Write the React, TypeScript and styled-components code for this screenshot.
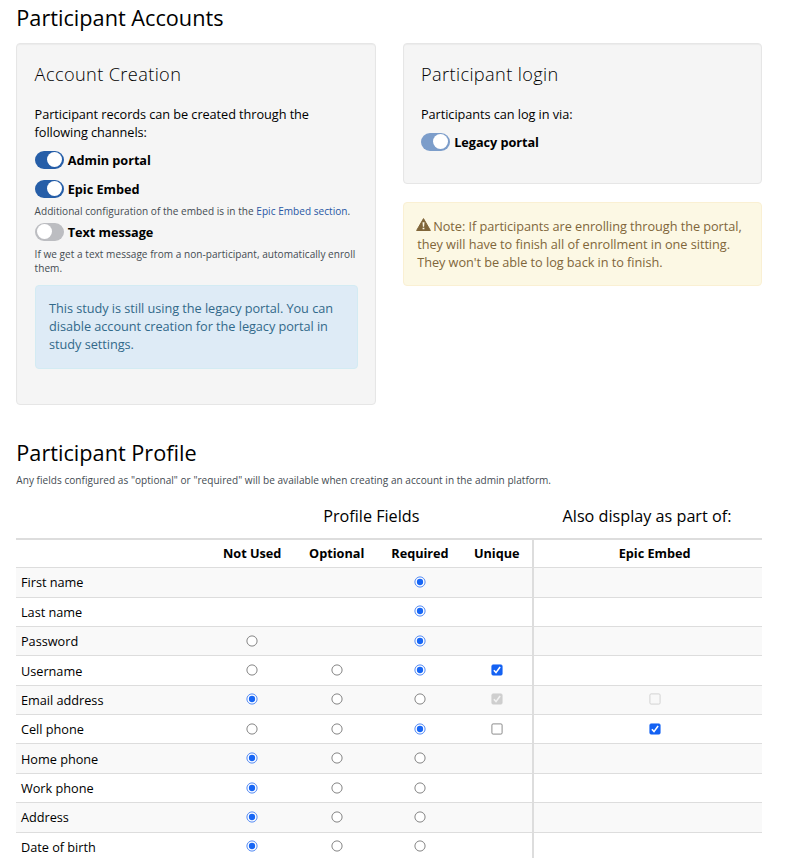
import React from 'react';
import styled, { createGlobalStyle } from 'styled-components';

const GlobalStyle = createGlobalStyle`
  *, *::before, *::after { box-sizing: border-box; }
  html, body { margin: 0; height: 858px; overflow: hidden; background: #fff; }
  body { font-family: "Open Sans", "Noto Sans", sans-serif; font-size: 12.72px; line-height: 18px; color: #000; }
`;

const Page = styled.main`
  width: 746px;
  height: 858px;
  margin-left: 16.3px;
  overflow: hidden;
`;

const Title = styled.h2<{ $top: number }>`
  margin: 0;
  padding-top: ${(p) => p.$top}px;
  font-size: 21.7px;
  line-height: 24px;
  font-weight: 400;
`;

const Columns = styled.div`
  display: grid;
  grid-template-columns: 360px 359.4px;
  column-gap: 26.4px;
  align-items: start;
  margin-top: 13px;
`;

const Well = styled.section<{ $height: number }>`
  height: ${(p) => p.$height}px;
  padding: 17px 17.3px;
  background: #f5f5f5;
  border: 1px solid #e6e6e6;
  border-radius: 4px;
  box-shadow: inset 0 1px 1px rgba(0, 0, 0, 0.04);
`;

const WellTitle = styled.h3`
  margin: 1px 0 19px;
  font-size: 18.2px;
  line-height: 24px;
  font-weight: 300;
  letter-spacing: 0.37px;
`;

const Text = styled.p`
  margin: 0;
  letter-spacing: -0.06px;
`;

const SwitchRow = styled.div<{ $top: number }>`
  display: flex;
  align-items: center;
  gap: 3.7px;
  height: 19px;
  margin-top: ${(p) => p.$top}px;
  font-weight: 700;
`;

const Track = styled.span<{ $color: string; $on: boolean }>`
  display: flex;
  justify-content: ${(p) => (p.$on ? 'flex-end' : 'flex-start')};
  align-items: center;
  width: 29.5px;
  height: 18px;
  padding: 0 2px;
  border-radius: 9px;
  background: ${(p) => p.$color};
`;

const Thumb = styled.span`
  width: 15px;
  height: 15px;
  border-radius: 50%;
  background: #fff;
`;

const SwitchLabel = styled.span`
  letter-spacing: -0.05px;
`;

const Help = styled.p<{ $top: number }>`
  margin: ${(p) => p.$top}px 0 0;
  font-size: 10.05px;
  line-height: 14px;
  letter-spacing: 0.032px;
  color: #444b52;
`;

const Link = styled.a`
  color: #2857a4;
`;

const Alert = styled.div<{ $kind: 'info' | 'warning' }>`
  height: ${(p) => (p.$kind === 'info' ? 83.6 : 84)}px;
  padding: ${(p) => (p.$kind === 'info' ? 13 : 14)}px 13.5px;
  border: 1px solid ${(p) => (p.$kind === 'info' ? '#d3ebf3' : '#faf0d3')};
  border-radius: 4px;
  background: ${(p) => (p.$kind === 'info' ? '#deebf6' : '#fcf8e4')};
  color: ${(p) => (p.$kind === 'info' ? '#32698a' : '#80663a')};
  margin-top: ${(p) => (p.$kind === 'info' ? 10 : 18)}px;
  letter-spacing: -0.045px;
`;

const WarningSvg = styled.svg`
  display: inline-block;
  margin: 0 2px 0 -1px;
  vertical-align: 0;
`;

const Table = styled.div`
  margin-top: 18px;
`;

const columns = '193.6px 84.6px 84.4px 82.2px 71.3px 229.6px';

const GroupRow = styled.div`
  display: grid;
  grid-template-columns: 194px 322px 229.4px;
  height: 33px;
  font-size: 16.2px;
  line-height: 22.6px;
  text-align: center;
`;

const Row = styled.div<{ $striped?: boolean; $head?: boolean }>`
  display: grid;
  grid-template-columns: ${columns};
  height: ${(p) => (p.$head ? 29 : 29.38)}px;
  border-top: ${(p) => (p.$head ? 2 : 1)}px solid #dddddd;
  background: ${(p) => (p.$striped ? '#f9f9f9' : '#fff')};
  font-weight: ${(p) => (p.$head ? 700 : 400)};
  letter-spacing: ${(p) => (p.$head ? -0.03 : -0.02)}px;
`;

const Cell = styled.div<{ $name?: boolean; $embed?: boolean; $head?: boolean }>`
  display: flex;
  align-items: center;
  justify-content: ${(p) => (p.$name ? 'flex-start' : 'center')};
  padding-bottom: ${(p) => (p.$head ? 1 : 0)}px;
  padding-left: ${(p) => (p.$name ? 4.7 : p.$embed ? 13 : 0)}px;
  border-left: ${(p) => (p.$embed ? '2px solid #dddddd' : '0')};
`;

const Control = styled.svg`
  display: block;
  margin-top: -1px;
`;

type Mark = 'off' | 'on' | 'disabled' | 'disabledOn' | null;

function Radio({ on }: { on: boolean }) {
  return (
    <Control width="12" height="12" viewBox="0 0 12 12" role="radio" aria-checked={on}>
      <circle cx="6" cy="6" r="5.1" fill="#fff" stroke={on ? '#3f7df3' : '#777'} strokeWidth="0.9" />
      {on && <circle cx="6" cy="6" r="3.15" fill="#1766f5" />}
    </Control>
  );
}

function Check({ mark }: { mark: Mark }) {
  const fill = mark === 'on' ? '#1462f3' : mark === 'disabledOn' ? '#cfcfcf' : mark === 'disabled' ? '#f8f8f8' : '#fff';
  const stroke = mark === 'off' ? '#808080' : mark === 'disabled' ? '#d0d0d0' : fill;
  const checked = mark === 'on' || mark === 'disabledOn';
  return (
    <Control width="12" height="12" viewBox="0 0 12 12" role="checkbox" aria-checked={checked}>
      <rect x="0.9" y="0.9" width="10.2" height="10.2" rx="1.2" fill={fill} stroke={stroke} strokeWidth="0.9" />
      {checked && (
        <path d="M2.9 6.3 5 8.6 9.1 3" fill="none" stroke={mark === 'on' ? '#fff' : '#f2f2f2'} strokeWidth="1.6" />
      )}
    </Control>
  );
}

function Switch({ label, on, color, top }: { label: string; on: boolean; color: string; top: number }) {
  return (
    <SwitchRow $top={top}>
      <Track $color={color} $on={on}><Thumb /></Track>
      <SwitchLabel>{label}</SwitchLabel>
    </SwitchRow>
  );
}

type Field = { name: string; options: string; selected: number; unique: Mark; embed: Mark };

// `options` flags which of Not Used / Optional / Required are offered.
const fields: Field[] = [
  { name: 'First name', options: '001', selected: 2, unique: null, embed: null },
  { name: 'Last name', options: '001', selected: 2, unique: null, embed: null },
  { name: 'Password', options: '101', selected: 2, unique: null, embed: null },
  { name: 'Username', options: '111', selected: 2, unique: 'on', embed: null },
  { name: 'Email address', options: '111', selected: 0, unique: 'disabledOn', embed: 'disabled' },
  { name: 'Cell phone', options: '111', selected: 2, unique: 'off', embed: 'on' },
  { name: 'Home phone', options: '111', selected: 0, unique: null, embed: null },
  { name: 'Work phone', options: '111', selected: 0, unique: null, embed: null },
  { name: 'Address', options: '111', selected: 0, unique: null, embed: null },
  { name: 'Date of birth', options: '111', selected: 0, unique: null, embed: null },
];

export default function App() {
  return (
    <Page>
      <GlobalStyle />
      <Title $top={6}>Participant Accounts</Title>
      <Columns>
        <Well $height={362}>
          <WellTitle>Account Creation</WellTitle>
          <Text>Participant records can be created through the<br />following channels:</Text>
          <Switch label="Admin portal" on color="#265ea8" top={9} />
          <Switch label="Epic Embed" on color="#265ea8" top={10} />
          <Help $top={6}>Additional configuration of the embed is in the <Link>Epic Embed section</Link>.</Help>
          <Switch label="Text message" on={false} color="#bcbdc1" top={4} />
          <Help $top={6}>If we get a text message from a non-participant, automatically enroll<br />them.</Help>
          <Alert $kind="info">
            This study is still using the legacy portal. You can<br />disable account creation for the legacy portal in<br />study settings.
          </Alert>
        </Well>
        <div>
          <Well $height={141.4}>
            <WellTitle>Participant login</WellTitle>
            <Text>Participants can log in via:</Text>
            <Switch label="Legacy portal" on color="#7c9dca" top={9} />
          </Well>
          <Alert $kind="warning">
            <WarningSvg width="15" height="13" viewBox="0 0 15 13" aria-hidden="true">
              <path d="M7.5.6 14.4 12.5H.6Z" fill="currentColor" stroke="currentColor" strokeLinejoin="round" />
              <path d="M6.5 4.2h2L8.1 8.7H6.9ZM6.6 9.7h1.8v1.6H6.6Z" fill="#fcf8e4" />
            </WarningSvg>
            Note: If participants are enrolling through the portal,<br />they will have to finish all of enrollment in one sitting.<br />They won't be able to log back in to finish.
          </Alert>
        </div>
      </Columns>
      <Title $top={36}>Participant Profile</Title>
      <Help $top={8.2}>Any fields configured as "optional" or "required" will be available when creating an account in the admin platform.</Help>
      <Table>
        <GroupRow>
          <span />
          <span>Profile Fields</span>
          <span>Also display as part of:</span>
        </GroupRow>
        <Row $head>
          <Cell $head $name />
          <Cell $head>Not Used</Cell>
          <Cell $head>Optional</Cell>
          <Cell $head>Required</Cell>
          <Cell $head>Unique</Cell>
          <Cell $head $embed>Epic Embed</Cell>
        </Row>
        {fields.map((f, i) => (
          <Row key={f.name} $striped={i % 2 === 0}>
            <Cell $name>{f.name}</Cell>
            {[0, 1, 2].map((c) => (
              <Cell key={c}>{f.options[c] === '1' && <Radio on={f.selected === c} />}</Cell>
            ))}
            <Cell>{f.unique && <Check mark={f.unique} />}</Cell>
            <Cell $embed>{f.embed && <Check mark={f.embed} />}</Cell>
          </Row>
        ))}
      </Table>
    </Page>
  );
}
